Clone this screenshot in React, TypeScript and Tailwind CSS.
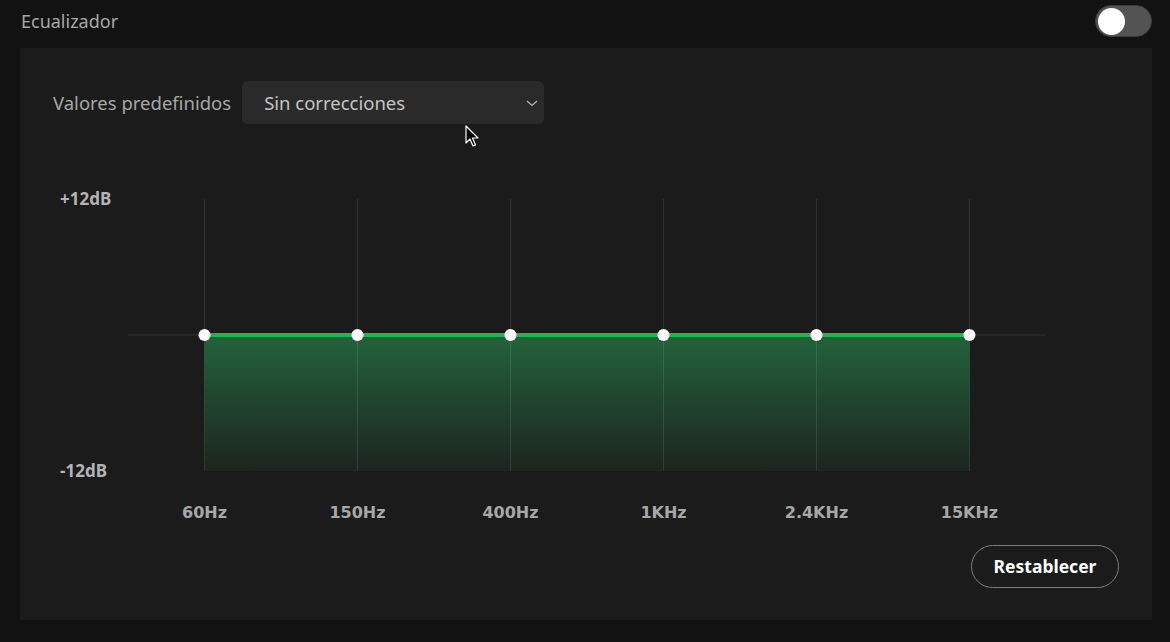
const BANDS = ["60Hz", "150Hz", "400Hz", "1KHz", "2.4KHz", "15KHz"];
const STEP = 153;
const CHART_W = STEP * BANDS.length;
const CHART_H = 272;
const MID = 136;

function Chart() {
  const xs = BANDS.map((_, i) => STEP / 2 + STEP * i);
  const first = xs[0];
  const last = xs[xs.length - 1];
  return (
    <svg width={CHART_W} height={CHART_H} className="block overflow-visible">
      <defs>
        <linearGradient id="eqFill" x1="0" y1="0" x2="0" y2="1">
          <stop offset="0" stopColor="#22633b" />
          <stop offset="1" stopColor="#1d241f" />
        </linearGradient>
      </defs>
      <line x1={0} y1={MID} x2={CHART_W - 1} y2={MID} stroke="#333333" strokeWidth={1} />
      <rect x={first} y={MID} width={last - first} height={CHART_H - MID} fill="url(#eqFill)" />
      {xs.map((x) => (
        <line key={x} x1={x} y1={0} x2={x} y2={CHART_H} stroke="#ffffff" strokeOpacity={0.1} strokeWidth={1} />
      ))}
      <line x1={first} y1={MID} x2={last} y2={MID} stroke="#1fb551" strokeWidth={4} />
      {xs.map((x) => (
        <circle key={`d${x}`} cx={x} cy={MID} r={6} fill="#ffffff" />
      ))}
    </svg>
  );
}

export default function App() {
  return (
    <div
      className="w-[1170px] h-[642px] bg-[#121212] pl-[20px] pr-[18px] overflow-hidden"
      style={{ fontFamily: '"Noto Sans", "Liberation Sans", sans-serif' }}
    >
      {/* Header */}
      <div className="h-[42px] flex items-center justify-between">
        <span className="pl-px text-[18px] text-[#a7a7a7]">Ecualizador</span>
        <div className="w-[57px] h-[32px] rounded-full bg-[#535353] border border-[#3e3e3e] flex items-center px-[2px]">
          <div className="w-[27px] h-[27px] rounded-full bg-white" />
        </div>
      </div>

      {/* Panel */}
      <div className="relative mt-[6px] bg-[#1b1b1b] h-[572px] pt-[33px] pl-[33px] pr-[33px]">
        {/* Presets */}
        <div className="flex items-center gap-[11px]">
          <span className="text-[18.5px] text-[#a7a7a7]">Valores predefinidos</span>
          <div className="w-[302px] h-[43px] rounded-[6px] bg-[#2a2a2a] flex items-center justify-between pl-[22px] pr-[5px]">
            <span className="text-[18.5px] text-[#c4c4c4]">Sin correcciones</span>
            <svg width="14" height="14" viewBox="0 0 14 14" className="text-[#b3b3b3]">
              <path d="M2 5 L7 9.5 L12 5" fill="none" stroke="currentColor" strokeWidth="1.3" />
            </svg>
          </div>
        </div>

        {/* Chart */}
        <div className="mt-[75px] flex">
          <div className="w-[75px] h-[294px] -my-[11px] pl-[7px] flex flex-col justify-between text-[17px] font-bold text-[#b3b3b3] leading-[22px]">
            <span>+12dB</span>
            <span>-12dB</span>
          </div>
          <Chart />
        </div>
        <div
          className="ml-[75px] mt-[32px] grid grid-cols-6 w-[918px]"
          style={{ fontFamily: '"DejaVu Sans", "Noto Sans", sans-serif' }}
        >
          {BANDS.map((b) => (
            <span key={b} className="text-center text-[16px] font-bold text-[#a7a7a7] leading-[20px]">
              {b}
            </span>
          ))}
        </div>

        <div className="mt-[22px] flex justify-end">
          <button className="w-[148px] h-[43px] rounded-full border border-[#7c7c7c] text-white text-[17.5px] font-bold">
            Restablecer
          </button>
        </div>

        {/* Cursor */}
        <svg
          width="16"
          height="24"
          viewBox="0 0 16 24"
          className="absolute left-[445px] top-[77px]"
        >
          <path
            d="M1 1 L1 18 L5 14 L8 21 L10.5 20 L7.5 13 L13 13 Z"
            fill="#000000"
            stroke="#ffffff"
            strokeWidth="1.2"
            strokeLinejoin="round"
          />
        </svg>
      </div>
    </div>
  );
}
